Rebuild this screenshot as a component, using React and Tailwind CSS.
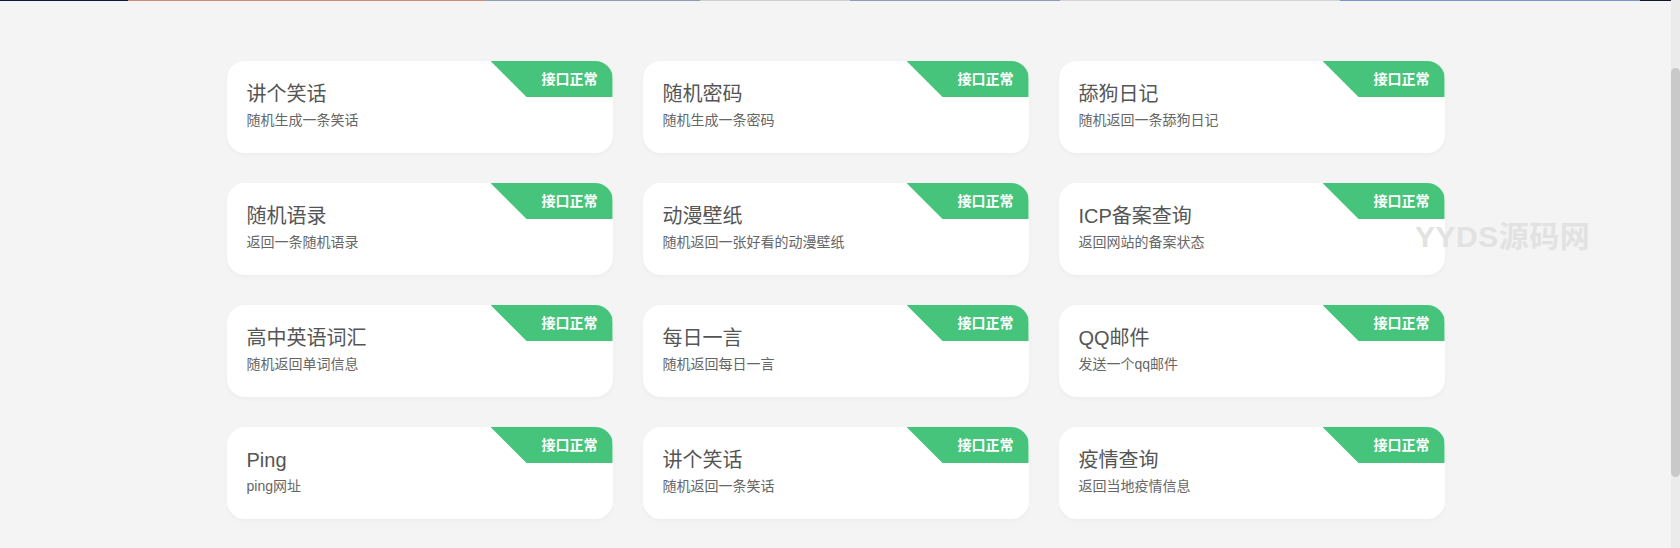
const APIS = [
    { title: '讲个笑话', desc: '随机生成一条笑话' },
    { title: '随机密码', desc: '随机生成一条密码' },
    { title: '舔狗日记', desc: '随机返回一条舔狗日记' },
    { title: '随机语录', desc: '返回一条随机语录' },
    { title: '动漫壁纸', desc: '随机返回一张好看的动漫壁纸' },
    { title: 'ICP备案查询', desc: '返回网站的备案状态' },
    { title: '高中英语词汇', desc: '随机返回单词信息' },
    { title: '每日一言', desc: '随机返回每日一言' },
    { title: 'QQ邮件', desc: '发送一个qq邮件' },
    { title: 'Ping', desc: 'ping网址' },
    { title: '讲个笑话', desc: '随机返回一条笑话' },
    { title: '疫情查询', desc: '返回当地疫情信息' },
];

const FONT = "font-['Liberation_Sans','Noto_Sans_CJK_SC',sans-serif]";

function ApiCard({ title, desc }) {
    return (
        <div className="relative h-[92px] overflow-hidden rounded-[18px] bg-white pl-[20px] pt-[19px] shadow-[0_2px_4px_rgba(0,0,0,0.03)]">
            {/* status badge */}
            <div className="absolute right-0 top-0 flex h-[36px] w-[122px] items-center justify-end bg-[#47c47b] pr-[15px] [clip-path:polygon(0_0,100%_0,100%_100%,36px_100%)]">
                <span className="text-[14px] font-bold leading-none text-white">接口正常</span>
            </div>
            <h3 className="text-[20px] leading-[28px] text-[#555]">{title}</h3>
            <p className="mt-[2px] text-[14px] leading-[20px] text-[#666]">{desc}</p>
        </div>
    );
}

export default function App() {
    return (
        <div className={`flex h-[548px] overflow-hidden bg-[#f4f4f4] ${FONT}`}>
            <div className="relative flex flex-1 flex-col">
                {/* bottom edge of the header banner */}
                <div className="h-px bg-[linear-gradient(90deg,#0b1a38_0px,#0b1a38_128px,#d08c73_128px,#d08c73_485px,#8d9bb3_485px,#8d9bb3_700px,#cfcfcf_700px,#cfcfcf_850px,#8a9cb8_850px,#8a9cb8_1060px,#d2d2d2_1060px,#d2d2d2_1340px,#7d97c4_1340px,#7d97c4_1640px,#111827_1640px)]" />

                <div className="pt-[60px]">
                    <div className="mx-auto grid w-[1218px] grid-cols-3 gap-[30px]">
                        {APIS.map((api, i) => (
                            <ApiCard key={i} title={api.title} desc={api.desc} />
                        ))}
                    </div>
                </div>

                {/* watermark */}
                <div className="pointer-events-none absolute left-[1415px] top-[222px] text-[30px] font-bold leading-none tracking-[0.5px] text-[#e2e2e2]">
                    YYDS源码网
                </div>
            </div>

            {/* scrollbar */}
            <div className="flex w-[9px] flex-col bg-[#ebebeb]">
                <div className="mt-[68px] h-[409px] rounded-full bg-[#c9c9c9]" />
            </div>
        </div>
    );
}
